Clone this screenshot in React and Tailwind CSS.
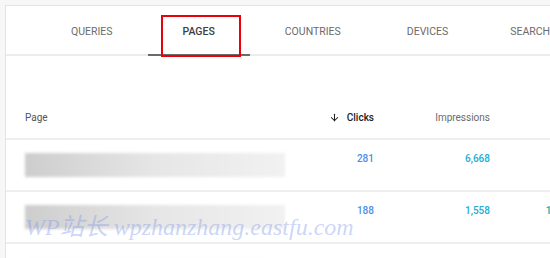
import React from 'react';
import { ArrowDown } from 'lucide-react';

const tabs = [
  { label: 'Queries', pad: 'px-[35px]' },
  { label: 'Pages', pad: 'px-[35px]' },
  { label: 'Countries', pad: 'pl-[35px] pr-[33px]' },
  { label: 'Devices', pad: 'pl-[33px] pr-[31px]' },
  { label: 'Search appearance', pad: 'pl-[31px] pr-[31px]' },
];

const rows = [
  { clicks: '281', impressions: '6,668', ctr: '4.2%' },
  { clicks: '188', impressions: '1,558', ctr: '12.1%' },
  { clicks: '', impressions: '', ctr: '' },
];

const Blur = () => (
  <div className="w-[260px] h-[24px] bg-gradient-to-r from-[#cdcdcd] via-[#e6e6e6] to-[#f1f1f1] blur-[1.5px]" />
);

export default function App() {
  return (
    <div
      className="w-[550px] h-[258px] overflow-hidden bg-[#f7f7f7] pt-[5px] pl-[5px]"
      style={{ fontFamily: 'Roboto, "Liberation Sans", sans-serif' }}
    >
      <div className="relative h-full bg-white border-l border-t border-[#e4e4e4] overflow-hidden">
        {/* tab bar */}
        <div className="flex h-[50px] pl-[30px] border-b-2 border-[#ececec] whitespace-nowrap">
          {tabs.map((t) => {
            const active = t.label === 'Pages';
            return (
              <div
                key={t.label}
                className={`relative shrink-0 flex items-center pt-[3px] ${t.pad} text-[10.5px] uppercase ${
                  active ? 'font-medium text-[#3c4043]' : 'text-[#6b6b6b]'
                }`}
              >
                {t.label}
                {active && (
                  <>
                    <div className="absolute left-0 right-0 -bottom-[2px] h-[2px] bg-[#6b6b6b]" />
                    <div className="absolute left-[13px] top-[9px] w-[80px] h-[42px] border-2 border-[#e8000b]" />
                  </>
                )}
              </div>
            );
          })}
        </div>

        {/* table */}
        <div className="mt-[40px] text-[10px]">
          <div className="flex items-center h-[44px] pl-[19px] border-b-2 border-[#eeeeee]">
            <div className="w-[274px] shrink-0 text-[#555]">Page</div>
            <div className="w-[75px] shrink-0 flex items-center justify-end gap-[7px] font-medium text-[#202124]">
              <ArrowDown size={11} strokeWidth={2.2} />
              Clicks
            </div>
            <div className="w-[116px] shrink-0 text-right text-[#6b6b6b]">Impressions</div>
            <div className="w-[83px] shrink-0 text-right text-[#6b6b6b]">CTR</div>
          </div>

          {rows.map((r, i) => (
            <div key={i} className="flex items-start h-[52px] pl-[19px] pt-[11px] border-b-2 border-[#eeeeee]">
              <div className="w-[274px] shrink-0 pt-[2px]">
                {i < 2 ? <Blur /> : <div className="w-[240px] h-[6px] mt-[4px] bg-[#eeeeee] blur-[2px]" />}
              </div>
              <div className="w-[75px] shrink-0 text-right font-medium text-[#4a90e8]">{r.clicks}</div>
              <div className="w-[116px] shrink-0 text-right font-medium text-[#22acd6]">{r.impressions}</div>
              <div className="w-[83px] shrink-0 text-right font-medium text-[#26a69a]">{r.ctr}</div>
            </div>
          ))}
        </div>

        {/* watermark */}
        <div
          className="absolute left-[19px] top-[203px] text-[24px] italic text-[#7b95ea]/40 whitespace-nowrap pointer-events-none"
          style={{ fontFamily: '"Liberation Serif", "Noto Sans CJK SC", serif' }}
        >
          WP站长 wpzhanzhang.eastfu.com
        </div>
      </div>
    </div>
  );
}
